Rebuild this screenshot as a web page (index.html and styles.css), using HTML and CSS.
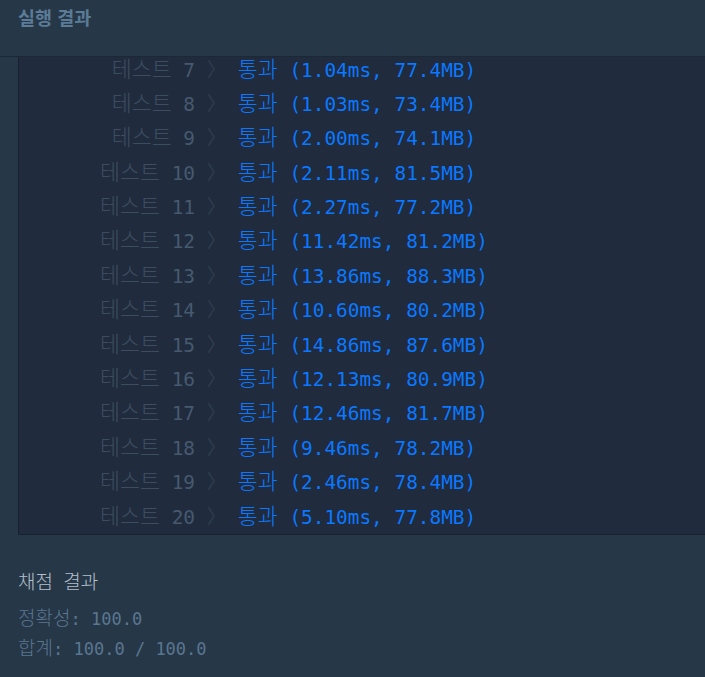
FILE: index.html
```html
<!DOCTYPE html>
<html lang="ko">
<head>
<meta charset="utf-8">
<link rel="stylesheet" href="styles.css">
</head>
<body>
<div class="page">
  <header class="panel-head">
    <h2 class="panel-title">실행 결과</h2>
  </header>
  <div class="console">
    <div class="rows">
      <div class="row"><span class="label"><span class="ko">테스트</span> 7</span><span class="sep"> 〉 </span><span class="result"><span class="ko">통과</span> (1.04ms, 77.4MB)</span></div>
      <div class="row"><span class="label"><span class="ko">테스트</span> 8</span><span class="sep"> 〉 </span><span class="result"><span class="ko">통과</span> (1.03ms, 73.4MB)</span></div>
      <div class="row"><span class="label"><span class="ko">테스트</span> 9</span><span class="sep"> 〉 </span><span class="result"><span class="ko">통과</span> (2.00ms, 74.1MB)</span></div>
      <div class="row"><span class="label"><span class="ko">테스트</span> 10</span><span class="sep"> 〉 </span><span class="result"><span class="ko">통과</span> (2.11ms, 81.5MB)</span></div>
      <div class="row"><span class="label"><span class="ko">테스트</span> 11</span><span class="sep"> 〉 </span><span class="result"><span class="ko">통과</span> (2.27ms, 77.2MB)</span></div>
      <div class="row"><span class="label"><span class="ko">테스트</span> 12</span><span class="sep"> 〉 </span><span class="result"><span class="ko">통과</span> (11.42ms, 81.2MB)</span></div>
      <div class="row"><span class="label"><span class="ko">테스트</span> 13</span><span class="sep"> 〉 </span><span class="result"><span class="ko">통과</span> (13.86ms, 88.3MB)</span></div>
      <div class="row"><span class="label"><span class="ko">테스트</span> 14</span><span class="sep"> 〉 </span><span class="result"><span class="ko">통과</span> (10.60ms, 80.2MB)</span></div>
      <div class="row"><span class="label"><span class="ko">테스트</span> 15</span><span class="sep"> 〉 </span><span class="result"><span class="ko">통과</span> (14.86ms, 87.6MB)</span></div>
      <div class="row"><span class="label"><span class="ko">테스트</span> 16</span><span class="sep"> 〉 </span><span class="result"><span class="ko">통과</span> (12.13ms, 80.9MB)</span></div>
      <div class="row"><span class="label"><span class="ko">테스트</span> 17</span><span class="sep"> 〉 </span><span class="result"><span class="ko">통과</span> (12.46ms, 81.7MB)</span></div>
      <div class="row"><span class="label"><span class="ko">테스트</span> 18</span><span class="sep"> 〉 </span><span class="result"><span class="ko">통과</span> (9.46ms, 78.2MB)</span></div>
      <div class="row"><span class="label"><span class="ko">테스트</span> 19</span><span class="sep"> 〉 </span><span class="result"><span class="ko">통과</span> (2.46ms, 78.4MB)</span></div>
      <div class="row"><span class="label"><span class="ko">테스트</span> 20</span><span class="sep"> 〉 </span><span class="result"><span class="ko">통과</span> (5.10ms, 77.8MB)</span></div>
    </div>
  </div>
  <section class="summary">
    <h3 class="summary-title"><span class="ko">채점</span> <span class="ko">결과</span></h3>
    <p class="summary-line"><span class="ko">정확성</span>: 100.0</p>
    <p class="summary-line"><span class="ko">합계</span>: 100.0 / 100.0</p>
  </section>
</div>
</body>
</html>
```

FILE: styles.css
```css
html, body {
  margin: 0;
  padding: 0;
  background: #263747;
}
.page {
  width: 705px;
  height: 677px;
  overflow: hidden;
  background: #263747;
  font-family: "DejaVu Sans Mono", "Noto Sans CJK KR", monospace;
}
.panel-head {
  height: 56px;
  border-bottom: 1px solid #1b2836;
  padding: 0 18px;
}
.panel-title {
  margin: 0;
  padding-top: 5px;
  font-family: "Noto Sans CJK KR", sans-serif;
  font-weight: 700;
  font-size: 18.5px;
  line-height: 24px;
  color: #5b7b96;
}
.console {
  margin-left: 18px;
  background: #202b3d;
  border-left: 1px solid #18222f;
  border-bottom: 1px solid #18222f;
  height: 478px;
  overflow: hidden;
  box-sizing: border-box;
}
.rows {
  margin-top: -3.5px;
}
.row {
  height: 34.4px;
  line-height: 34.4px;
  font-size: 19.4px;
  white-space: pre;
}
.ko {
  font-family: "Noto Sans CJK KR", sans-serif;
  font-size: 1.12em;
  font-weight: 300;
  line-height: 1;
}
.label {
  display: inline-block;
  width: 176px;
  text-align: right;
  color: #46596e;
}
.label .ko {
  color: #3c4d61;
}
.sep {
  color: #2f3e52;
}
.result {
  color: #0a78ff;
}
.summary {
  padding: 36px 18px 0;
}
.summary-title {
  height: 22px;
  line-height: 22px;
  margin: 0 0 14px;
  font-weight: 400;
  font-size: 17px;
  color: #b3c0cc;
  white-space: pre;
}
.summary-line {
  height: 22px;
  line-height: 22px;
  margin: 0 0 8px;
  font-size: 17px;
  color: #5a7690;
  white-space: pre;
}
```
